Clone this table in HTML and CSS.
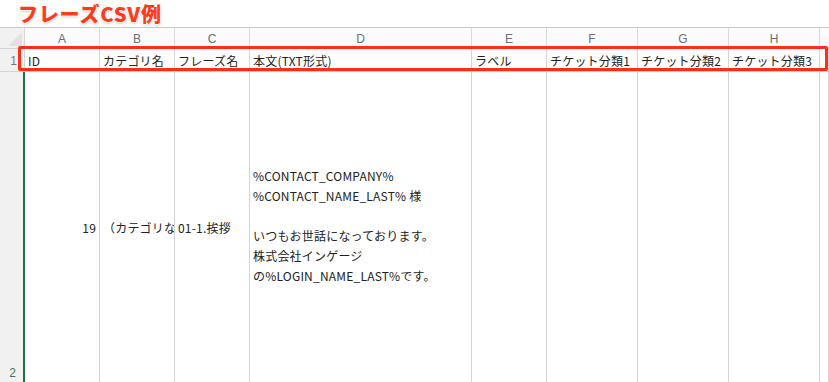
FILE: index.html
```html
<!DOCTYPE html>
<html lang="ja">
<head>
<meta charset="utf-8">
<link rel="stylesheet" href="styles.css">
</head>
<body>
<div class="page">
  <div class="title">フレーズCSV例</div>
  <div class="sheet">
    <div class="corner"><span class="tri"></span></div>
    <div class="colhead">A</div>
    <div class="colhead">B</div>
    <div class="colhead">C</div>
    <div class="colhead">D</div>
    <div class="colhead">E</div>
    <div class="colhead">F</div>
    <div class="colhead">G</div>
    <div class="colhead">H</div>
    <div class="colhead blank"></div>

    <div class="rowhead">1</div>
    <div class="cell">ID</div>
    <div class="cell">カテゴリ名</div>
    <div class="cell">フレーズ名</div>
    <div class="cell">本文(TXT形式)</div>
    <div class="cell">ラベル</div>
    <div class="cell">チケット分類1</div>
    <div class="cell">チケット分類2</div>
    <div class="cell">チケット分類3</div>
    <div class="cell"></div>

    <div class="rowhead sel">2</div>
    <div class="cell tall num">19</div>
    <div class="cell tall">（カテゴリな</div>
    <div class="cell tall">01-1.挨拶</div>
    <div class="cell tall body">%CONTACT_COMPANY%
%CONTACT_NAME_LAST% 様

いつもお世話になっております。
株式会社インゲージ
の%LOGIN_NAME_LAST%です。</div>
    <div class="cell tall"></div>
    <div class="cell tall"></div>
    <div class="cell tall"></div>
    <div class="cell tall"></div>
    <div class="cell tall"></div>
  </div>
  <div class="highlight"></div>
</div>
</body>
</html>
```

FILE: styles.css
```css
* { box-sizing: border-box; }
html, body { margin: 0; padding: 0; background: #fff; }
body {
  width: 829px;
  height: 382px;
  overflow: hidden;
  font-family: "Noto Sans CJK JP", sans-serif;
  font-size: 12px;
  color: #222;
}
.page { position: relative; }
.title {
  height: 27px;
  line-height: 28px;
  padding-left: 18px;
  font-size: 20px;
  font-weight: 900;
  color: #ff3a1e;
  letter-spacing: 0.8px;
  text-shadow: 1px 0 0 #fff, -1px 0 0 #fff, 0 1px 0 #fff, 0 -1px 0 #fff,
               0 1px 3px rgba(0,0,0,0.35);
}
.sheet {
  display: grid;
  grid-template-columns: 25px 75px 75px 75px 222px 75px 91px 91px 91px 1fr;
  grid-template-rows: 21px 23px 312px;
  border-top: 1px solid #c9c9c9;
}
.corner {
  background: #f1f1f1;
  border-right: 1px solid #d4d4d4;
  border-bottom: 1px solid #d4d4d4;
  position: relative;
}
.tri {
  position: absolute;
  right: 2px;
  bottom: 2px;
  width: 0;
  height: 0;
  border-left: 14px solid transparent;
  border-bottom: 14px solid #e2e2e2;
}
.colhead {
  background: #fbfbfb;
  color: #6e6e6e;
  text-align: center;
  line-height: 22px;
  font-family: "Liberation Sans", "Noto Sans CJK JP", sans-serif;
  font-size: 12px;
  border-right: 1px solid #dadada;
  border-bottom: 1px solid #d4d4d4;
}
.colhead.blank { border-right: none; }
.rowhead {
  background: #f1f1f1;
  color: #777;
  text-align: right;
  padding-right: 7px;
  line-height: 24px;
  font-family: "Liberation Sans", "Noto Sans CJK JP", sans-serif;
  font-size: 12px;
  border-right: 1px solid #d4d4d4;
  border-bottom: 1px solid #d4d4d4;
}
.rowhead.sel {
  color: #3c7a57;
  border-right: 2px solid #217346;
  display: flex;
  align-items: flex-end;
  justify-content: flex-end;
  padding-bottom: 2px;
  line-height: 16px;
}
.cell {
  border-right: 1px solid #d4d4d4;
  border-bottom: 1px solid #d4d4d4;
  padding: 0 3px;
  line-height: 24px;
  white-space: nowrap;
  overflow: hidden;
  letter-spacing: 0.2px;
}
.cell.tall {
  display: flex;
  align-items: center;
  line-height: 20px;
}
.cell.num { justify-content: flex-end; }
.cell.body {
  white-space: pre-line;
  padding-bottom: 3px;
}
.highlight {
  position: absolute;
  left: 18px;
  top: 46px;
  width: 810px;
  height: 25px;
  border: 3px solid #ff2d1a;
  border-radius: 2px;
}
```
